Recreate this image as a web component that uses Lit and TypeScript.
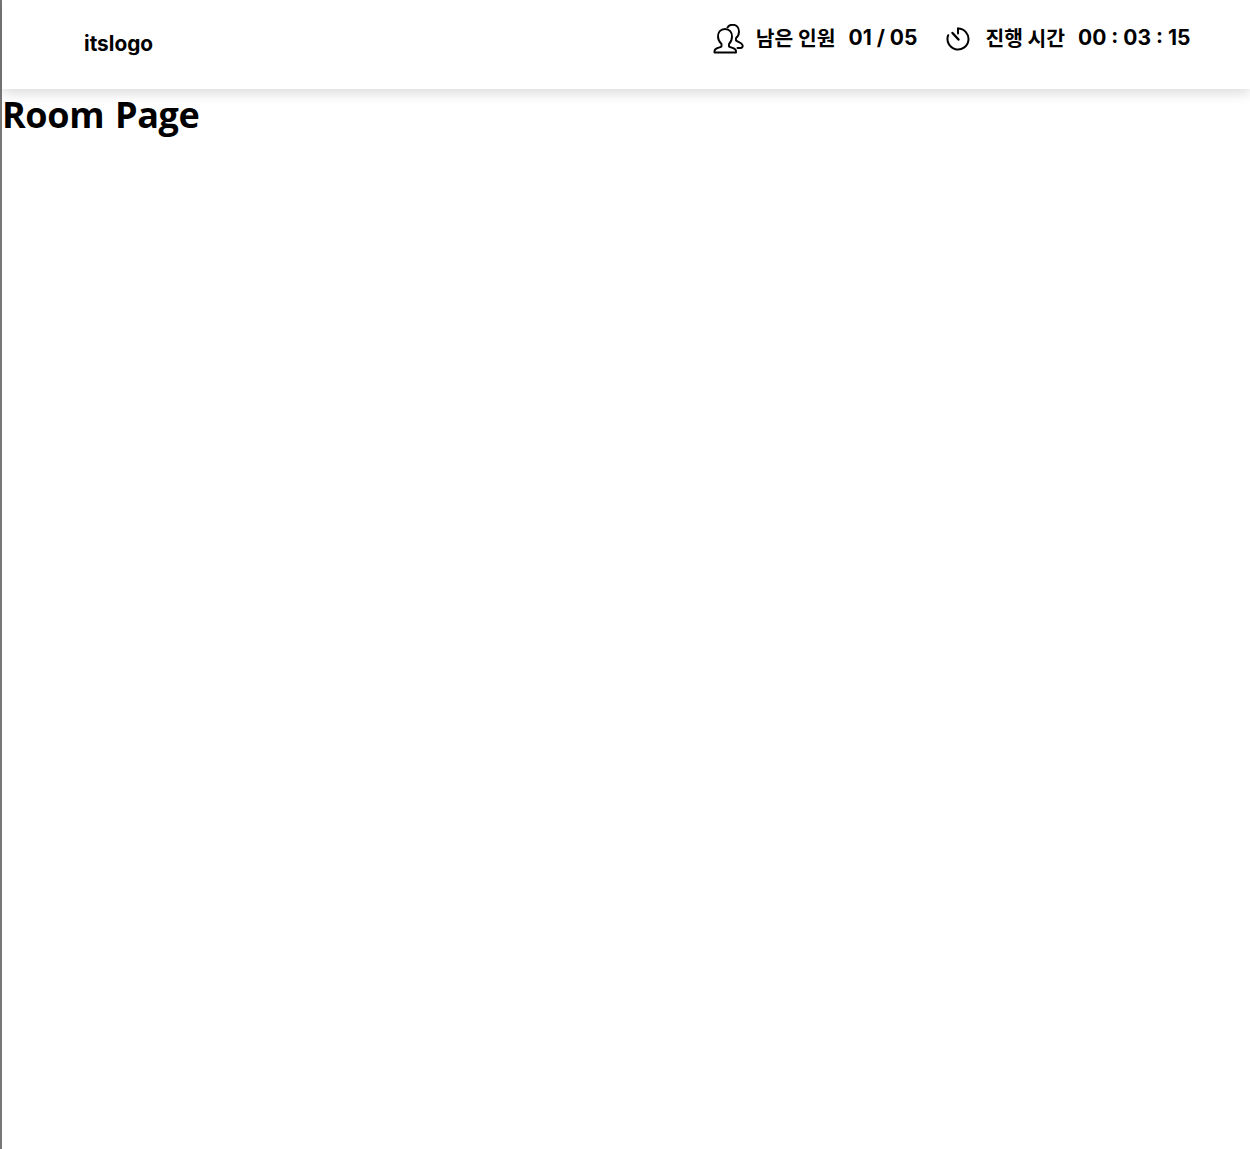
import { LitElement, html, css } from "lit";
import { customElement } from "lit/decorators.js";

@customElement("app-root")
export class AppRoot extends LitElement {
  static styles = css`
    :host {
      display: block;
      min-height: 1149px;
      box-sizing: border-box;
      border-left: 2px solid #777777;
      background: #fff;
      color: #000;
      font-family: "Noto Sans CJK KR", sans-serif;
    }
    .header {
      height: 89px;
      display: flex;
      align-items: flex-start;
      justify-content: space-between;
      box-shadow: 0 4px 12px rgba(0, 0, 0, 0.15);
      padding: 0 59.5px 0 82px;
      box-sizing: border-box;
      font-family: Inter, "Noto Sans CJK KR", sans-serif;
      font-weight: 700;
    }
    .logo {
      font-size: 20.8px;
      line-height: 24px;
      margin-top: 32px;
    }
    .stats {
      display: flex;
      align-items: center;
      height: 75px;
      font-size: 21px;
    }
    .stat {
      display: flex;
      align-items: center;
    }
    .stat + .stat {
      margin-left: 29px;
    }
    .icon {
      display: block;
      flex: none;
    }
    .clock {
      margin-right: 3px;
      margin-top: 2px;
    }
    .person {
      margin-top: 3px;
      margin-right: -1px;
    }
    .label {
      margin-left: 12px;
      margin-right: 13px;
      margin-bottom: 2px;
      font-family: "Noto Sans CJK KR", sans-serif;
      font-size: 20.4px;
      font-weight: 700;
    }
    h1 {
      margin: 0;
      font-size: 36px;
      line-height: 52px;
      font-weight: 700;
      letter-spacing: -0.4px;
      word-spacing: 2px;
      font-family: "Open Sans", sans-serif;
    }
  `;

  render() {
    return html`
      <div class="header">
        <div class="logo">itslogo</div>
        <div class="stats">
          <div class="stat">
            <svg class="icon person" width="32" height="30" viewBox="0 0 32 30" fill="none" stroke="#000" stroke-width="1.9" stroke-linejoin="round" stroke-linecap="round">
              <path d="M12 5c4.500 0 7 3.300 7 7.500 0 3-1.500 6-3 7.500v2.500c2 1.500 7 1.300 7 4.500v1.500H1.500V27c0-3.200 5-3 7-4.500V20C7 18.500 5 15.500 5 12.500 5 8.300 7.500 5 12 5z"/>
              <path d="M14.500 3.500c1-1.800 3-2.800 5-2.800 4 0 6.500 3 6.500 6.800 0 3-1.500 5.500-3 6.500v2.500c2 1.500 5.500 2 6.500 4.500.6 1.600-.5 3-2 3h-3"/>
            </svg>
            <span class="label">남은 인원</span>
            <span class="value">01 / 05</span>
          </div>
          <div class="stat">
            <svg class="icon clock" width="24" height="24" viewBox="0 0 24 24" fill="none" stroke="#000" stroke-width="2" stroke-linecap="round">
              <path d="M12 1.500a10.500 10.500 0 1 1-9.800 6.700"/>
              <path d="M12 1.500v5"/>
              <path d="M6.500 6l6 6.500" stroke-width="2.400"/>
            </svg>
            <span class="label">진행 시간</span>
            <span class="value">00 : 03 : 15</span>
          </div>
        </div>
      </div>
      <h1>Room Page</h1>
    `;
  }
}
